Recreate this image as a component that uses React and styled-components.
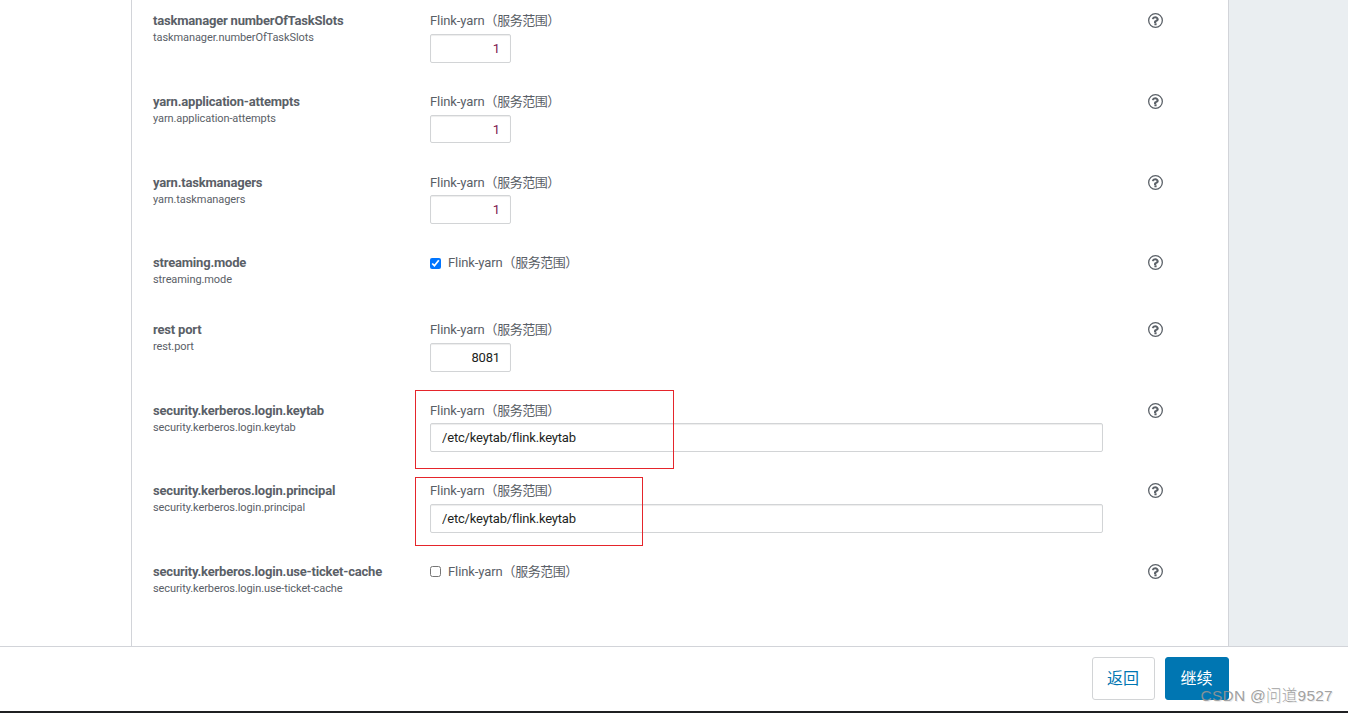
import React, { useState } from "react";
import styled, { createGlobalStyle } from "styled-components";

const GlobalStyle = createGlobalStyle`
    * {
        box-sizing: border-box;
    }

    body {
        margin: 0;
        overflow: hidden;
        background: #fff;
        color: #5a6067;
        font-family: Roboto, "Noto Sans CJK SC", sans-serif;
        font-size: 13px;
        line-height: 20px;
    }
`;

const Page = styled.div`
    position: relative;
    width: 100%;
    height: 713px;
    display: flex;
    flex-direction: column;
    border-bottom: 2px solid #1f2022;
`;

const Body = styled.div`
    flex: 1;
    min-height: 0;
    display: flex;
    background: #eaeef1;
`;

const Steps = styled.aside`
    width: 131px;
    background: #fff;
`;

const Panel = styled.main`
    width: 1098px;
    padding: 11.35px 0 0 21px;
    background: #fff;
    border-left: 1px solid #d2d4d9;
    border-right: 1px solid #d2d4d9;
`;

const Row = styled.section`
    height: ${({ $short }) => ($short ? "66.75px" : "80.67px")};
    display: grid;
    grid-template-columns: 277px 718px 20px;
    align-items: start;
`;

const Name = styled.div`
    & > h4 {
        margin: 0;
        font-size: 13px;
        font-weight: 700;
        line-height: 20px;
        letter-spacing: -0.19px;
    }

    & > p {
        margin: 0;
        font-size: 11px;
        line-height: 14px;
        letter-spacing: -0.09px;
    }
`;

const Field = styled.div`
    position: relative;
    width: 673px;
`;

const Scope = styled.label`
    height: 20px;
    display: flex;
    align-items: center;
    gap: 7px;
    letter-spacing: -0.1px;
    white-space: nowrap;

    & em {
        font-style: normal;
        letter-spacing: -0.45px;
    }
`;

const Checkbox = styled.input`
    width: 11px;
    height: 11px;
    margin: -0.5px 0 0;
`;

const Input = styled.input`
    display: block;
    width: ${({ $number }) => ($number ? "81px" : "100%")};
    height: 28.85px;
    margin-top: 2.6px;
    padding: 0 ${({ $number }) => ($number ? "10px" : "11px")} 0 11px;
    border: 1px solid #d2d4d6;
    border-radius: 2px;
    outline: none;
    background: #fff;
    box-shadow: inset 0 1px 1px rgba(0, 0, 0, 0.075);
    color: ${({ $tint }) => $tint || "#1d1f22"};
    font: inherit;
    letter-spacing: -0.18px;
    text-align: ${({ $number }) => ($number ? "right" : "left")};
`;

const Mark = styled.div`
    position: absolute;
    left: -15px;
    top: ${({ $top }) => $top}px;
    width: ${({ $width }) => $width}px;
    height: ${({ $height }) => $height}px;
    border: 1px solid #e5252b;
    pointer-events: none;
`;

const Help = styled.span`
    height: 19px;
    display: flex;
    align-items: center;

    & > svg {
        width: 15px;
        height: 15px;
    }
`;

const Footer = styled.footer`
    height: 65px;
    padding: 10px 119px 0 0;
    display: flex;
    justify-content: flex-end;
    align-items: flex-start;
    gap: 10px;
    background: #fff;
    border-top: 1px solid #d2d4d9;
`;

const Button = styled.button`
    width: ${({ $primary }) => ($primary ? "64px" : "63px")};
    height: 43px;
    padding: 0 1px 3px 0;
    border: 1px solid ${({ $primary }) => ($primary ? "#0076b2" : "#d2d4d6")};
    border-radius: 3px;
    background: ${({ $primary }) => ($primary ? "#0076b2" : "#fff")};
    color: ${({ $primary }) => ($primary ? "#fff" : "#0076b2")};
    font-family: inherit;
    font-size: 16px;
`;

const Watermark = styled.div`
    position: absolute;
    right: 15px;
    bottom: 5px;
    color: rgba(150, 150, 150, 0.9);
    font-family: "Liberation Sans", "Noto Sans CJK SC", sans-serif;
    font-size: 15.5px;
    font-weight: 300;
    letter-spacing: 0.25px;
    text-shadow: 1px 1px 0 rgba(110, 110, 110, 0.15);
    white-space: nowrap;
`;

const properties = [
    { title: "taskmanager numberOfTaskSlots", name: "taskmanager.numberOfTaskSlots", type: "number", value: "1", tint: "#7d1550" },
    { title: "yarn.application-attempts", name: "yarn.application-attempts", type: "number", value: "1", tint: "#7d1550" },
    { title: "yarn.taskmanagers", name: "yarn.taskmanagers", type: "number", value: "1", tint: "#7d1550" },
    { title: "streaming.mode", name: "streaming.mode", type: "boolean", value: true },
    { title: "rest port", name: "rest.port", type: "number", value: "8081" },
    { title: "security.kerberos.login.keytab", name: "security.kerberos.login.keytab", type: "text", value: "/etc/keytab/flink.keytab", mark: { top: -11, width: 259, height: 79 } },
    { title: "security.kerberos.login.principal", name: "security.kerberos.login.principal", type: "text", value: "/etc/keytab/flink.keytab", mark: { top: -4.4, width: 228, height: 69 } },
    { title: "security.kerberos.login.use-ticket-cache", name: "security.kerberos.login.use-ticket-cache", type: "boolean", value: false },
];

const HelpIcon = () => (
    <svg viewBox="0 0 1536 1536" fill="currentColor">
        <circle cx="768" cy="768" r="700" fill="none" stroke="currentColor" strokeWidth="132" />
        <path d="M880 1072v160q0 14-9 23t-23 9h-160q-14 0-23-9t-9-23v-160q0-14 9-23t23-9h160q14 0 23 9t9 23zm216-432q0 50-15 90t-45.500 69-52 44-59.500 36q-32 18-46.500 28t-26 24-11.500 29v32q0 14-9 23t-23 9h-160q-14 0-23-9t-9-23v-68q0-35 10.500-64.500t24-47.500 39-35.500 41-25.500 44.500-21q53-25 75-43t22-49q0-42-43.500-71.500t-95.500-29.500q-56 0-95 27-29 20-80 83-9 12-25 12-11 0-19-6l-108-82q-10-7-12-20t5-23q122-192 349-192 129 0 238.500 89.500t109.500 214.500z" />
    </svg>
);

const Property = ({ item }) => {
    const [value, setValue] = useState(item.value);
    const isBoolean = item.type === "boolean";

    return (
        <Row $short={isBoolean}>
            <Name>
                <h4>{item.title}</h4>
                <p>{item.name}</p>
            </Name>
            <Field>
                <Scope>
                    {isBoolean && (
                        <Checkbox type="checkbox" checked={value} onChange={(e) => setValue(e.target.checked)} />
                    )}
                    <span>Flink-yarn<em>（服务范围）</em></span>
                </Scope>
                {!isBoolean && (
                    <Input
                        $number={item.type === "number"}
                        $tint={item.tint}
                        spellCheck={false}
                        value={value}
                        onChange={(e) => setValue(e.target.value)}
                    />
                )}
                {item.mark && <Mark $top={item.mark.top} $width={item.mark.width} $height={item.mark.height} />}
            </Field>
            <Help><HelpIcon /></Help>
        </Row>
    );
};

const App = () => {
    return (
        <>
            <GlobalStyle />
            <Page>
                <Body>
                    <Steps />
                    <Panel>
                        {properties.map((item) => (
                            <Property key={item.name} item={item} />
                        ))}
                    </Panel>
                </Body>
                <Footer>
                    <Button>返回</Button>
                    <Button $primary>继续</Button>
                </Footer>
                <Watermark>CSDN @问道9527</Watermark>
            </Page>
        </>
    );
};

export default App;
